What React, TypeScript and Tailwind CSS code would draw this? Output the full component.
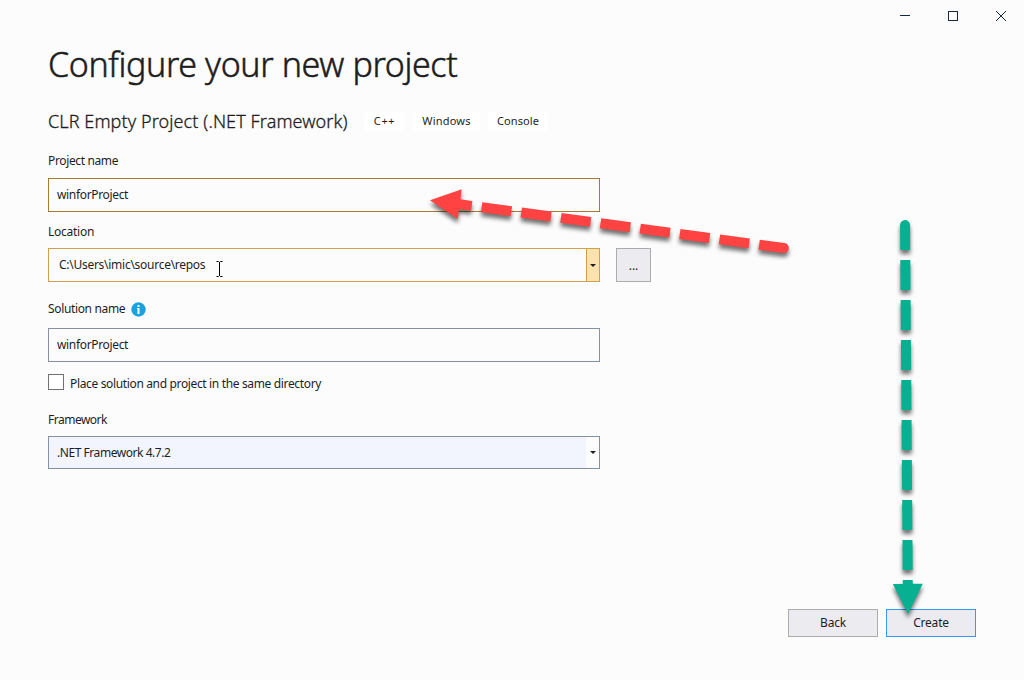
import type { ReactNode } from 'react';

const redDashes = [12.1, 52.1, 92.1, 132.1, 172.1, 212.1, 252.1, 292.1];
const greenDashes = [40, 80, 120, 160, 200, 240, 280, 320, 360];

function Label({ children }: { children: ReactNode }) {
  return <div className="flex h-4 items-center text-[12px]">{children}</div>;
}

function Tag({ children, className }: { children: ReactNode; className: string }) {
  return (
    <span className={`flex h-[19px] items-center justify-center rounded-[4px] bg-white text-[11px] ${className}`}>
      {children}
    </span>
  );
}

function DropGlyph() {
  return (
    <svg width="6" height="3" viewBox="0 0 6 3">
      <path d="M0 0H6L3 3Z" fill="#1e1e1e" />
    </svg>
  );
}

function WindowButtons() {
  return (
    <div className="-mr-px flex h-8 justify-end">
      <div className="flex w-12 items-center justify-center">
        <svg width="10" height="10" viewBox="0 0 10 10" shapeRendering="crispEdges">
          <path d="M0 4.5H10" stroke="#142840" />
        </svg>
      </div>
      <div className="flex w-12 items-center justify-center">
        <svg width="10" height="10" viewBox="0 0 10 10" shapeRendering="crispEdges">
          <rect x="0.5" y="0.5" width="9" height="9" fill="none" stroke="#142840" />
        </svg>
      </div>
      <div className="flex w-12 items-center justify-center">
        <svg width="10" height="10" viewBox="0 0 10 10">
          <path d="M0 0L10 10M10 0L0 10" stroke="#142840" />
        </svg>
      </div>
    </div>
  );
}

function Arrows() {
  return (
    <svg className="pointer-events-none absolute inset-0" width="1024" height="680" viewBox="0 0 1024 680">
      <defs>
        <filter id="shadow" filterUnits="userSpaceOnUse" x="0" y="0" width="1024" height="680" colorInterpolationFilters="sRGB">
          <feDropShadow dx="0" dy="4" stdDeviation="2" floodColor="#000" floodOpacity="0.55" />
        </filter>
      </defs>
      <g filter="url(#shadow)">
        <g transform="translate(430 200.2) rotate(7.7)" fill="#ff4242">
          <path d="M0 0L30 -15V15Z" />
          {redDashes.map((x) => (
            <rect key={x} x={x} y="-5" width="30" height="10" />
          ))}
          <path d="M332.1 -5H357.1A5 5 0 0 1 357.1 5H332.1Z" />
        </g>
      </g>
      <g filter="url(#shadow)">
        <g transform="translate(905 220) rotate(-0.44)" fill="#08b092">
          <path d="M-5 30V5A5 5 0 0 1 5 5V30Z" />
          {greenDashes.map((y) => (
            <rect key={y} x="-5" y={y} width="10" height={y === 360 ? 10 : 30} />
          ))}
          <path d="M-15 364H15L0 394Z" />
        </g>
      </g>
      <path d="M216.5 261.5H218.5L219.5 262.5L220.5 261.5H222.5M219.5 262V276M216.5 276.5H218.5L219.5 275.5L220.5 276.5H222.5" fill="none" stroke="#000" />
    </svg>
  );
}

export default function App() {
  return (
    <div className="relative flex h-[680px] w-[1024px] flex-col overflow-hidden bg-[#fcfcfc] font-['Noto_Sans','Open_Sans',sans-serif] text-[#1e1e1e]">
      <WindowButtons />
      <main className="flex flex-1 flex-col items-start whitespace-nowrap pl-12">
        <h1 className="mt-2 flex h-12 items-center text-[34px] font-light tracking-[-0.38px] [-webkit-text-stroke:0.5px_#1e1e1e]">Configure your new project</h1>
        <div className="mt-[21px] flex h-6 items-center">
          <h2 className="w-[316px] text-[18px] font-light tracking-[0.1px] [-webkit-text-stroke:0.3px_#1e1e1e]">CLR Empty Project (.NET Framework)</h2>
          <div className="flex gap-2">
            <Tag className="w-[41px] tracking-[0.6px]">C++</Tag>
            <Tag className="w-[67px] tracking-[0.2px]">Windows</Tag>
            <Tag className="w-[60px] tracking-[0.1px]">Console</Tag>
          </div>
        </div>

        <div className="mt-5">
          <Label><span className="tracking-[-0.36px]">Project name</span></Label>
        </div>
        <div className="mt-[9px] flex h-[34px] w-[552px] items-center border border-[#a67c2e] pl-2 text-[12px]">
          <span className="tracking-[-0.34px]">winforProject</span>
        </div>

        <div className="mt-3">
          <Label><span className="tracking-[-0.25px]">Location</span></Label>
        </div>
        <div className="mt-2 flex gap-4">
          <div className="flex h-[34px] w-[552px] border border-[#d0a04c] text-[12px]">
            <div className="flex flex-1 items-center pl-[10px]">
              <span className="tracking-[-0.27px]">C:\Users\imic\source\repos</span>
            </div>
            <div className="flex w-[13px] items-center justify-center border-l border-[#d0a04c] bg-[#fde2b0]">
              <DropGlyph />
            </div>
          </div>
          <button className="flex h-[34px] w-[35px] items-center justify-center border border-[#acacac] bg-[#ececf0] pt-[2px] text-[12px]">...</button>
        </div>

        <div className="mt-[19px] flex items-center gap-[6px]">
          <Label><span className="tracking-[-0.35px]">Solution name</span></Label>
          <svg width="15" height="15" viewBox="0 0 15 15">
            <circle cx="7.5" cy="7.5" r="7.2" fill="#1ba1e2" />
            <path d="M6.5 3H8.5V5H6.5ZM6 6H8.5V12H6.5V7H6Z" fill="#fff" />
          </svg>
        </div>
        <div className="mt-[11px] flex h-[34px] w-[552px] items-center border border-[#8390a5] pl-2 text-[12px]">
          <span className="tracking-[-0.34px]">winforProject</span>
        </div>

        <div className="mt-3 flex h-[18px] items-start">
          <div className="h-4 w-4 border border-[#717171] bg-white" />
          <div className="ml-[6px] mt-[2px]">
            <Label><span className="tracking-[-0.35px]">Place solution and project in the same directory</span></Label>
          </div>
        </div>

        <div className="mt-5">
          <Label><span className="tracking-[-0.5px]">Framework</span></Label>
        </div>
        <div className="mt-2 flex h-[33px] w-[552px] border border-[#8390a5] bg-[#f2f5fd] text-[12px]">
          <div className="flex flex-1 items-center pl-2">
            <span className="tracking-[-0.45px]">.NET Framework 4.7.2</span>
          </div>
          <div className="flex w-[13px] items-center justify-center bg-[#fcfcfc]">
            <DropGlyph />
          </div>
        </div>
      </main>
      <footer className="mb-[43px] mr-12 flex justify-end gap-2 text-[12px] tracking-[-0.2px]">
        <button className="h-7 w-[90px] border border-[#acacac] bg-[#ececf0]">Back</button>
        <button className="h-7 w-[90px] border border-[#3399ff] bg-[#ececf0]">Create</button>
      </footer>
      <Arrows />
    </div>
  );
}
